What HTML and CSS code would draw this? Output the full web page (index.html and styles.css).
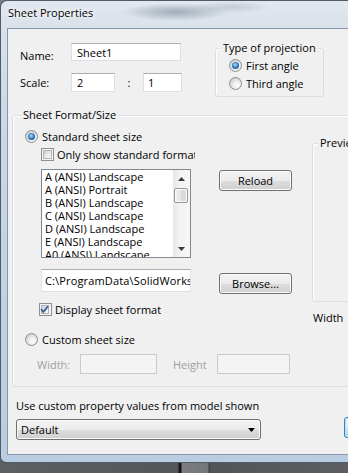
FILE: index.html
```html
<!DOCTYPE html>
<html lang="en">
<head>
<meta charset="utf-8">
<title>Sheet Properties</title>
<link rel="stylesheet" href="styles.css">
</head>
<body>
<div class="window">
  <div class="titlebar"><span class="title">Sheet Properties</span></div>
  <div class="client">
    <div class="top">
      <div class="namescale">
        <div class="name-row">
          <span class="lbl name-lbl">Name:</span>
          <div class="input name-in">Sheet1</div>
        </div>
        <div class="scale-row">
          <span class="lbl">Scale:</span>
          <div class="input s1">2</div>
          <span class="colon">:</span>
          <div class="input s2">1</div>
        </div>
      </div>
      <div class="group proj">
        <span class="legend">Type of projection</span>
        <div class="opt popt first"><span class="radio on"></span>First angle</div>
        <div class="opt popt"><span class="radio"></span>Third angle</div>
      </div>
    </div>

    <div class="group format">
      <span class="legend lg-format">Sheet Format/Size</span>
      <div class="format-body">
        <div class="fleft">
          <div class="opt std"><span class="radio on"></span>Standard sheet size</div>
          <div class="opt only"><span class="check"><i></i></span>Only show standard format</div>
          <div class="listbox">
            <div class="items">
              <div class="item">A (ANSI) Landscape</div>
              <div class="item">A (ANSI) Portrait</div>
              <div class="item">B (ANSI) Landscape</div>
              <div class="item">C (ANSI) Landscape</div>
              <div class="item">D (ANSI) Landscape</div>
              <div class="item">E (ANSI) Landscape</div>
              <div class="item">A0 (ANSI) Landscape</div>
            </div>
            <div class="vscroll">
              <div class="sbtn"><svg width="7" height="4" viewBox="0 0 7 4"><path d="M0 4h7L3.5 0z" fill="#3a3a3a"/></svg></div>
              <div class="thumb"></div>
              <div class="track"></div>
              <div class="sbtn"><svg width="7" height="4" viewBox="0 0 7 4"><path d="M0 0h7L3.5 4z" fill="#3a3a3a"/></svg></div>
            </div>
          </div>
          <div class="input path">C:\ProgramData\SolidWorks\lang\english\sheetformat</div>
          <div class="opt disp"><span class="check"><i></i><svg class="tick" width="11" height="11" viewBox="0 0 11 11"><path d="M2 5.2l2.4 2.7L9 2.2" fill="none" stroke="#3b5e94" stroke-width="1.8"/></svg></span>Display sheet format</div>
          <div class="opt custom"><span class="radio"></span>Custom sheet size</div>
          <div class="size-row">
            <span class="dlbl wl">Width:</span><div class="input dis wi"></div>
            <span class="dlbl hl">Height</span><div class="input dis hi"></div>
          </div>
        </div>
        <div class="fbtns">
          <div class="btn reload">Reload</div>
          <div class="btn browse">Browse...</div>
        </div>
        <div class="fprev">
          <div class="group preview"><span class="legend">Preview</span></div>
          <div class="wlbl">Width</div>
        </div>
      </div>
    </div>

    <div class="bottom">
      <div class="bleft">
        <div class="blabel">Use custom property values from model shown</div>
        <div class="combo"><span>Default</span><svg width="7" height="4" viewBox="0 0 7 4"><path d="M0 0h7L3.5 4z" fill="#000"/></svg></div>
      </div>
      <div class="btn ok">OK</div>
    </div>
  </div>
</div>
</body>
</html>
```

FILE: styles.css
```css
* { box-sizing: border-box; margin: 0; padding: 0; }

html, body { width: 348px; height: 473px; overflow: hidden; }

body {
  font-family: "Open Sans", "Noto Sans", sans-serif;
  font-size: 11px;
  line-height: 15px;
  color: #000;
  background:
    linear-gradient(to bottom, rgba(0,0,0,0) 0, rgba(0,0,0,.25) 100%),
    linear-gradient(to right, #7c7e82 0, #6f7175 178px, #1e1e1e 179px, #1e1e1e 181px, #a4a6a9 182px, #9a9c9f 208px, #505254 209px, #6d6f73 211px, #7b7d81 100%);
}

/* ---------- window frame ---------- */
.window {
  width: 440px;
  height: 463px;
  border: 1px solid #4f5b69;
  border-right: none;
  border-radius: 7px 0 0 6px;
  padding-left: 6px;
  display: flex;
  flex-direction: column;
  overflow: hidden;
  background:
    radial-gradient(ellipse 55px 9px at 175px 11px, rgba(110,124,140,.55), rgba(110,124,140,0)),
    radial-gradient(ellipse 40px 6px at 230px 6px, rgba(140,150,165,.35), rgba(140,150,165,0)),
    linear-gradient(to bottom, #e2e8ee 0, #d9e1ea 28px, #cbd8e6 120px, #b9cce1 100%);
}

.titlebar {
  height: 27px;
  padding: 4px 0 0 1px;
  flex: none;
}
.title {
  color: #000;
  text-shadow: 0 0 5px #fff, 0 0 3px #fff;
}

.client {
  width: 433px;
  height: 427px;
  flex: none;
  background: #f0f0f0;
  border: 1px solid #8797ab;
  border-right: none;
  overflow: hidden;
}

/* ---------- common controls ---------- */
.input {
  background: #fff;
  border: 1px solid #dbdfe6;
  border-top-color: #abadb3;
  display: flex;
  align-items: center;
  white-space: nowrap;
  overflow: hidden;
  flex: none;
}
.input.dis {
  background: #f4f4f4;
  border-color: #c8cbce;
}

.opt {
  display: flex;
  align-items: center;
  height: 15px;
  white-space: nowrap;
}

.radio {
  width: 13px;
  height: 13px;
  flex: none;
  border-radius: 50%;
  border: 1px solid #8c8e92;
  background: radial-gradient(circle at 62% 65%, #ffffff 0, #eeeeee 35%, #cfd1d4 75%, #b9bbbe 100%);
  display: flex;
  align-items: center;
  justify-content: center;
  margin-right: 4px;
}
.radio.on::after {
  content: "";
  width: 7px;
  height: 7px;
  border-radius: 50%;
  background: radial-gradient(circle at 45% 40%, #b9e3ff 0, #4f9bd8 35%, #1e5a98 70%, #123b68 100%);
}

.check {
  width: 13px;
  height: 13px;
  flex: none;
  border: 1px solid #8e8f8f;
  background: #f4f4f4;
  padding: 1px;
  margin-right: 3px;
  display: flex;
}
.check i {
  display: block;
  width: 9px;
  height: 9px;
  border: 1px solid #b0b4ba;
  background: linear-gradient(135deg, #c9ced4 0, #e9ebee 55%, #f8f8f8 100%);
}
.check .tick {
  margin-left: -10px;
  margin-top: -1px;
  flex: none;
}

.btn {
  height: 21px;
  border: 1px solid #707070;
  border-radius: 3px;
  background: linear-gradient(#f3f3f3 0, #ebebeb 50%, #dddddd 51%, #cfcfcf 100%);
  box-shadow: inset 0 0 0 1px #fbfbfb;
  display: flex;
  align-items: center;
  justify-content: center;
  flex: none;
}

.group {
  border: 1px solid #d5dfe5;
  border-radius: 3px;
  box-shadow: inset 1px 1px 0 #fff;
  flex: none;
}
.legend {
  display: block;
  width: max-content;
  margin: -9px 0 -6px 5px;
  padding: 0 2px;
  background: #f0f0f0;
  white-space: nowrap;
}

/* ---------- top area ---------- */
.top {
  display: flex;
  height: 86px;
}
.namescale {
  width: 207px;
  padding: 14px 0 0 12px;
  flex: none;
}
.lbl {
  width: 51px;
  flex: none;
}
.name-row {
  display: flex;
  height: 18px;
}
.name-lbl { padding-top: 5px; }
.name-in {
  width: 110px;
  height: 18px;
  padding-left: 5px;
}
.scale-row {
  display: flex;
  align-items: center;
  margin-top: 12px;
  height: 19px;
}
.s1 { width: 44px; height: 19px; padding-left: 5px; }
.colon { width: 28px; text-align: center; flex: none; }
.s2 { width: 39px; height: 19px; padding-left: 4px; }

.proj {
  margin-top: 19px;
  width: 109px;
  height: 49px;
}
.popt {
  height: 18px;
  margin-left: 13px;
}
.popt.first { margin-top: 7px; }

/* ---------- sheet format group ---------- */
.format {
  margin-left: 4px;
  width: 420px;
  height: 272px;
}
.lg-format { margin-left: 8px; }

.format-body {
  display: flex;
}
.fleft {
  width: 206px;
  padding-left: 12px;
  flex: none;
}
.std { margin-top: 13px; }
.only {
  margin-top: 3px;
  margin-left: 16px;
  width: 154px;
  overflow: hidden;
}

.listbox {
  margin-top: 7px;
  margin-left: 16px;
  width: 150px;
  height: 89px;
  border: 1px solid #828790;
  background: #fff;
  display: flex;
}
.items {
  flex: 1;
  overflow: hidden;
  padding-left: 3px;
}
.item {
  height: 13px;
  line-height: 13px;
  white-space: nowrap;
}
.vscroll {
  width: 17px;
  flex: none;
  display: flex;
  flex-direction: column;
  background: linear-gradient(to right, #e6e6e6 0, #f3f3f3 40%, #f6f6f6 100%);
}
.sbtn {
  height: 17px;
  flex: none;
  display: flex;
  align-items: center;
  justify-content: center;
}
.thumb {
  height: 15px;
  margin: 1px 2px 0 1px;
  border: 1px solid #979797;
  border-radius: 2px;
  background: linear-gradient(to right, #f2f2f2, #e4e4e4 50%, #d8d8d8 51%, #dcdcdc);
  box-shadow: inset 0 0 0 1px #fafafa;
  flex: none;
}
.track { flex: 1; }

.path {
  margin-top: 11px;
  margin-left: 16px;
  width: 150px;
  height: 23px;
  padding: 0 1px 0 3px;
  letter-spacing: 0.15px;
}

.disp {
  margin-top: 10px;
  margin-left: 14px;
}
.custom {
  margin-top: 15px;
}

.size-row {
  display: flex;
  align-items: center;
  margin-top: 7px;
  margin-left: 12px;
  height: 20px;
}
.dlbl {
  color: #a0a0a0;
  flex: none;
}
.wl { width: 43px; }
.wi { width: 77px; height: 20px; }
.hl { width: 44px; margin-left: 16px; }
.hi { width: 73px; height: 20px; }

.fbtns {
  width: 73px;
  flex: none;
}
.reload { margin-top: 54px; }
.browse { margin-top: 82px; }

.fprev {
  margin-left: 20px;
  width: 120px;
  flex: none;
}
.preview {
  margin-top: 27px;
  width: 120px;
  height: 159px;
}
.wlbl {
  margin-top: 8px;
  padding-left: 1px;
}

/* ---------- bottom ---------- */
.bottom {
  display: flex;
  padding: 11px 0 0 8px;
}
.bleft {
  width: 245px;
  flex: none;
}
.blabel {
  white-space: nowrap;
}
.combo {
  margin-top: 6px;
  height: 21px;
  border: 1px solid #707070;
  border-radius: 3px;
  background: linear-gradient(#f3f3f3 0, #ebebeb 50%, #dddddd 51%, #cfcfcf 100%);
  box-shadow: inset 0 0 0 1px #fbfbfb;
  display: flex;
  align-items: center;
  justify-content: space-between;
  padding: 0 5px 0 4px;
}
.ok {
  margin-left: 83px;
  margin-top: 19px;
  width: 75px;
  border-color: #3c7fb1;
  background: linear-gradient(#eaf6fd 0, #d9f0fc 50%, #bee6fd 51%, #a7d9f5 100%);
  box-shadow: inset 0 0 0 1px #b8e3fa;
}
```
